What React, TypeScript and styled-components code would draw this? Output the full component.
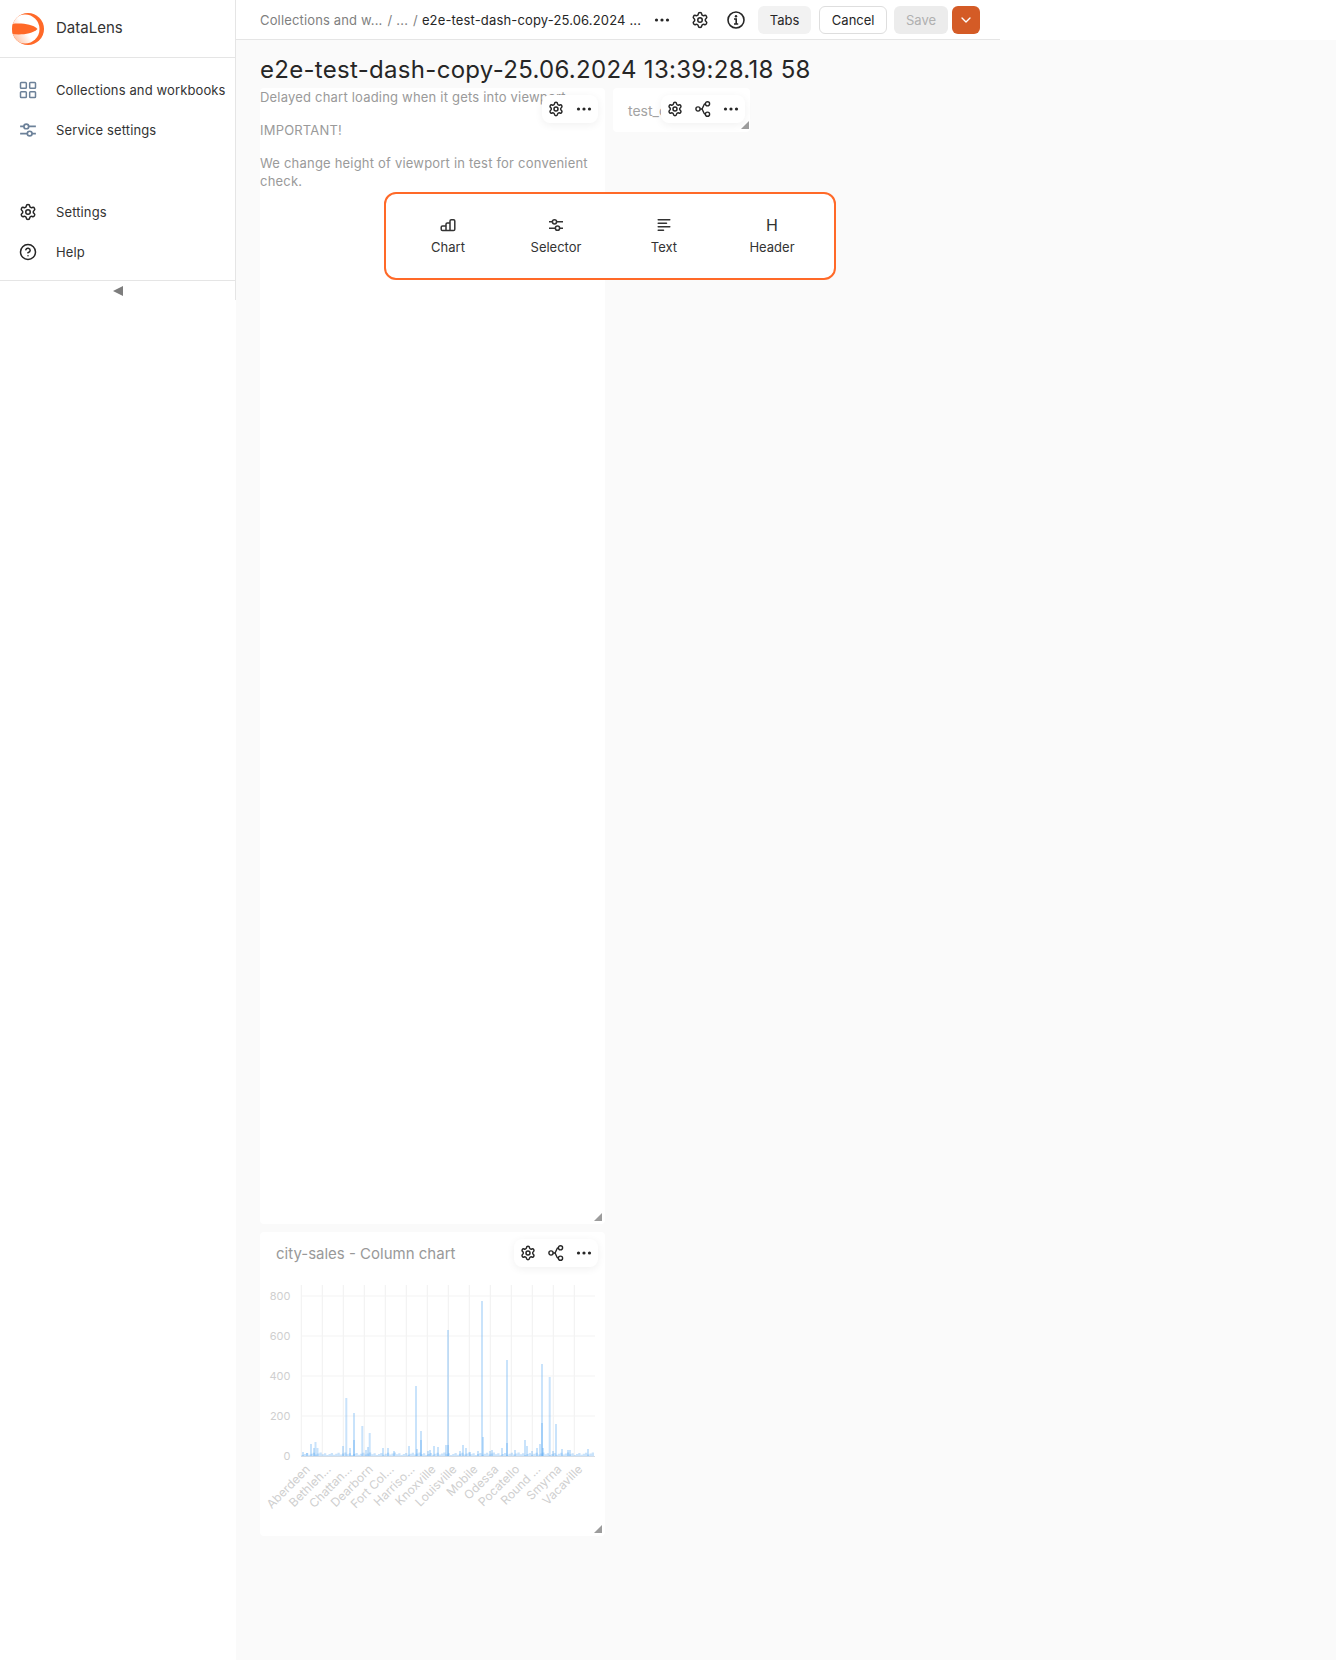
import React from 'react';
import styled, { createGlobalStyle } from 'styled-components';
import { ChevronDown, CircleHelp, LayoutGrid, Settings } from 'lucide-react';

const GlobalStyle = createGlobalStyle`
  html, body {
    margin: 0;
    padding: 0;
    background: #fff;
    font-family: Inter, "Noto Sans", sans-serif;
    font-size: 13px;
    color: #262626;
  }
`;

const Page = styled.div`
  display: grid;
  grid-template-columns: 236px 1fr;
  width: 1336px;
  height: 1660px;
  overflow: hidden;
`;

const Aside = styled.aside`
  height: 300px;
  border-right: 1px solid #e5e5e5;
  display: flex;
  flex-direction: column;
`;

const Brand = styled.div`
  display: flex;
  align-items: center;
  gap: 12px;
  height: 57px;
  box-sizing: content-box;
  padding-left: 12px;
  border-bottom: 1px solid #e5e5e5;
  font-size: 15px;
  color: #333;
`;

const BrandName = styled.span`
  margin-bottom: 2px;
`;

const Nav = styled.nav`
  display: flex;
  flex-direction: column;
  padding-top: 12px;
`;

const NavRow = styled.div<{ $gap?: number }>`
  display: flex;
  align-items: center;
  height: 40px;
  margin-top: ${({ $gap }) => $gap ?? 0}px;
  color: #333;
  letter-spacing: 0.12px;
  white-space: nowrap;
`;

const NavIcon = styled.span<{ $muted?: boolean }>`
  display: flex;
  justify-content: center;
  width: 56px;
  color: ${({ $muted }) => ($muted ? '#6c8199' : '#262626')};
`;

const Collapse = styled.div`
  margin-top: auto;
  height: 19px;
  border-top: 1px solid #e5e5e5;
  display: flex;
  align-items: center;
  justify-content: center;
`;

const CollapseArrow = styled.span`
  width: 0;
  height: 0;
  border-top: 5px solid transparent;
  border-bottom: 5px solid transparent;
  border-right: 10px solid #7d7d7d;
`;

const Main = styled.main`
  display: flex;
  flex-direction: column;
  position: relative;
`;

const TopBar = styled.header`
  width: 764px;
  height: 40px;
  box-sizing: border-box;
  border-bottom: 1px solid #e5e5e5;
  display: flex;
  align-items: center;
  padding: 0 20px 0 24px;
  white-space: nowrap;
`;

const Crumbs = styled.div`
  display: flex;
  align-items: center;
  width: 395px;
  color: #7f7f7f;
  letter-spacing: 0.15px;
`;

const CrumbSep = styled.span`
  margin: 0 4px 0 5px;
`;

const CrumbCurrent = styled.span`
  color: #262626;
`;

const TopIcon = styled.span<{ $left: number }>`
  display: flex;
  margin-left: ${({ $left }) => $left}px;
  color: #262626;
`;

const Button = styled.button<{ $kind: 'normal' | 'outlined' | 'disabled'; $left?: number }>`
  height: 28px;
  box-sizing: border-box;
  padding: 0 ${({ $kind }) => ($kind === 'outlined' ? '11.5px' : '12px')};
  border-radius: 6px;
  font: inherit;
  border: ${({ $kind }) => ($kind === 'outlined' ? '1px solid #dedede' : 'none')};
  background: ${({ $kind }) =>
    $kind === 'outlined' ? '#fff' : $kind === 'normal' ? '#f2f2f2' : '#ececec'};
  color: ${({ $kind }) => ($kind === 'disabled' ? '#b0b0b0' : '#262626')};
  margin-left: ${({ $left }) => $left ?? 8}px;
`;

const ArrowButton = styled.button`
  width: 28px;
  height: 28px;
  padding: 0;
  margin-left: 4px;
  border: none;
  border-radius: 6px;
  background: #d45b26;
  color: #fff;
  display: flex;
  align-items: center;
  justify-content: center;
`;

const Canvas = styled.div`
  flex: 1;
  background: #fafafa;
  padding-left: 24px;
`;

const Title = styled.h1`
  margin: 0;
  height: 48px;
  box-sizing: border-box;
  padding-top: 15px;
  font-size: 24px;
  line-height: 30px;
  font-weight: 400;
  letter-spacing: 0.3px;
  color: #262626;
  white-space: nowrap;
`;

const DashGrid = styled.div`
  display: grid;
  grid-template-columns: 345px 137px;
  column-gap: 8px;
  align-items: start;
`;

const Column = styled.div`
  display: flex;
  flex-direction: column;
  gap: 8px;
`;

const Widget = styled.section<{ $height: number }>`
  position: relative;
  height: ${({ $height }) => $height}px;
  background: #fff;
  border-radius: 4px;
`;

const Notes = styled.div`
  color: #9a9a9a;
  line-height: 18px;
  letter-spacing: 0.2px;

  p {
    margin: 0 0 15px;
  }
`;

const SmallTitle = styled.div`
  padding: 13px 0 0 15px;
  font-size: 14px;
  line-height: 20px;
  color: #a3a3a3;
`;

const ChartTitle = styled.div`
  padding: 12px 0 0 16px;
  height: 44px;
  box-sizing: border-box;
  font-size: 15px;
  line-height: 20px;
  color: #999;
`;

const Controls = styled.div<{ $right: number }>`
  position: absolute;
  top: 7px;
  right: ${({ $right }) => $right}px;
  height: 28px;
  background: #fff;
  border-radius: 8px;
  box-shadow: 0 2px 8px rgba(0, 0, 0, 0.06);
  display: flex;
  color: #262626;
`;

const ControlBtn = styled.span`
  width: 28px;
  height: 28px;
  display: flex;
  align-items: center;
  justify-content: center;
`;

const ResizeHandle = styled.span<{ $inset?: number }>`
  position: absolute;
  right: ${({ $inset }) => $inset ?? 3}px;
  bottom: 3px;
  width: 0;
  height: 0;
  border-left: 8px solid transparent;
  border-bottom: 8px solid #9c9c9c;
`;

const Palette = styled.div`
  position: absolute;
  left: 148px;
  top: 192px;
  width: 452px;
  height: 88px;
  box-sizing: border-box;
  border: 2px solid #ff6928;
  border-radius: 12px;
  background: #fff;
  padding: 0 8px;
  display: grid;
  grid-template-columns: repeat(4, 108px);
`;

const PaletteItem = styled.div`
  display: flex;
  flex-direction: column;
  align-items: center;
  padding-top: 23px;
  gap: 5px;
  color: #333;
  line-height: 18px;
`;

const PaletteGlyph = styled.span`
  display: flex;
  align-items: center;
  justify-content: center;
  height: 16px;
  font-size: 16px;
  line-height: 16px;
`;

const Logo = () => (
  <svg width="32" height="32" viewBox="0 0 32 32">
    <defs>
      <linearGradient id="lens" x1="1" y1="0.2" x2="0" y2="0.8">
        <stop offset="0.5" stopColor="#fff" />
        <stop offset="1" stopColor="#ffb794" />
      </linearGradient>
      <clipPath id="disc">
        <circle cx="16" cy="16" r="16" />
      </clipPath>
    </defs>
    <circle cx="16" cy="16" r="16" fill="#ff6928" />
    <g clipPath="url(#disc)">
      <circle cx="13" cy="16" r="14.5" fill="url(#lens)" />
      <path d="M0 11C8 10 20 10.5 25.5 16C20 21.5 8 22 0 21Z" fill="#ff6928" />
    </g>
  </svg>
);

const Dots = () => (
  <svg width="16" height="16" viewBox="0 0 16 16" fill="currentColor">
    <circle cx="2.5" cy="8" r="1.6" />
    <circle cx="8" cy="8" r="1.6" />
    <circle cx="13.5" cy="8" r="1.6" />
  </svg>
);

const Nodes = () => (
  <svg width="16" height="16" viewBox="0 0 16 16" fill="none" stroke="currentColor" strokeWidth="1.4">
    <circle cx="3" cy="8" r="2.1" />
    <circle cx="12.5" cy="2.8" r="2.1" />
    <circle cx="12.5" cy="13.2" r="2.1" />
    <path d="M5.1 8H6.5C8.5 8 8 2.8 10.4 2.8M6.5 8C8.5 8 8 13.2 10.4 13.2" />
  </svg>
);

const Info = () => (
  <svg width="18" height="18" viewBox="0 0 18 18" fill="none" stroke="currentColor" strokeWidth="1.6">
    <circle cx="9" cy="9" r="8" />
    <path d="M7 8H9.2V13M7 13H11.2" />
    <circle cx="9" cy="5.3" r="1.2" fill="currentColor" stroke="none" />
  </svg>
);

const Sliders = ({ size = 16 }: { size?: number }) => (
  <svg width={size} height={size} viewBox="0 0 16 16" fill="none" stroke="currentColor" strokeWidth="1.5">
    <path d="M1 4.8H4.5M8.5 4.8H15M1 11.2H7.5M11.5 11.2H15" />
    <circle cx="6.5" cy="4.8" r="2.1" />
    <circle cx="9.5" cy="11.2" r="2.1" />
  </svg>
);

const ChartGlyph = () => (
  <svg width="16" height="16" viewBox="0 0 16 16" fill="none" stroke="currentColor" strokeWidth="1.5" strokeLinejoin="round">
    <path d="M6 13.5H2.5C1.7 13.5 1.2 13 1.2 12.2V10.3C1.2 9.5 1.7 9 2.5 9H6M6 13.5V7.3C6 6.5 6.5 6 7.3 6H10V13.5M6 13.5H10M10 13.5H13.5C14.3 13.5 14.8 13 14.8 12.2V4C14.8 3.2 14.3 2.7 13.5 2.7H11.3C10.5 2.7 10 3.2 10 4V6" />
  </svg>
);

const TextGlyph = () => (
  <svg width="16" height="16" viewBox="0 0 16 16" fill="none" stroke="currentColor" strokeWidth="1.5" strokeLinecap="round">
    <path d="M2.2 2.7H13.8M2.2 6.2H10.5M2.2 9.7H13.8M2.2 13.2H7.5" />
  </svg>
);

const GRID_X = Array.from({ length: 14 }, (_, i) => 41.3 + i * 21);
const GRID_Y = [0, 200, 400, 600, 800];
const BASE = 180;

const CITIES = [
  'Aberdeen', 'Bethleh...', 'Chattan...', 'Dearborn', 'Fort Col...', 'Harriso...', 'Knoxville',
  'Louisville', 'Mobile', 'Odessa', 'Pocatello', 'Round ...', 'Smyrna', 'Vacaville',
];

// page x and pixel height of each bar, measured off the reference
const TALL_BARS: [number, number][] = [
  [345.3, 58], [353, 43], [361.3, 30], [368.7, 23], [415, 70], [420, 25], [447, 126], [481, 155],
  [506, 96], [541, 92], [548.7, 79], [555, 32],
];
const SMALL_BARS: [number, number][] = [
  [302, 4], [306, 3], [310, 12], [313, 8], [314.5, 14], [316.5, 8], [342, 10], [349, 8], [353, 16], [365, 6],
  [367, 9], [382, 8], [387, 8], [393, 5], [408, 10], [416, 7], [420, 16], [427, 5], [429, 6], [433, 10], [437, 9],
  [445, 11], [447, 11], [459, 5], [462, 11], [465, 8], [469, 4], [477, 5], [482, 19], [489, 5], [491, 6], [501, 8],
  [506, 13], [514, 6], [524, 16], [526, 10], [531, 5], [536, 8], [539, 12], [541, 33], [542, 8], [552, 5], [561, 7],
  [567, 6], [569, 6], [587, 7],
];

const noiseBars = Array.from({ length: 130 }, (_, i) => ({
  x: 301.5 + i * 2.25,
  h: 1 + ((i * 37) % 11) / 4,
}));

const ChartPlot = () => (
  <svg width="345" height="250" viewBox="0 0 345 250" fontFamily="Inter, sans-serif">
    {GRID_X.map((x) => (
      <line key={x} x1={x} x2={x} y1={9} y2={BASE} stroke="#f1f1f1" />
    ))}
    {GRID_Y.map((v) => (
      <g key={v}>
        {v > 0 && <line x1={41} x2={335} y1={BASE - v / 5} y2={BASE - v / 5} stroke="#f3f3f3" />}
        <text x={30.5} y={BASE - v / 5 + 4} fontSize="11" fill="#cfcfcf" textAnchor="end">
          {v}
        </text>
      </g>
    ))}
    <g fill="#4da2f1" fillOpacity="0.3">
      {noiseBars.map((b) => (
        <rect key={b.x} x={b.x - 260} y={BASE - b.h} width="2.25" height={b.h} />
      ))}
      {SMALL_BARS.map(([x, h]) => (
        <rect key={x} x={x - 260} y={BASE - h} width="2" height={h} />
      ))}
      {TALL_BARS.map(([x, h]) => (
        <rect key={x} x={x - 260} y={BASE - h} width="2" height={h} />
      ))}
    </g>
    <line x1={41} x2={335} y1={BASE + 0.5} y2={BASE + 0.5} stroke="#d5dde6" />
    {CITIES.map((c, i) => (
      <text
        key={c}
        transform={`translate(${50.8 + i * 20.95} 194) rotate(-45)`}
        fontSize="12"
        fill="#cfcfcf"
        textAnchor="end"
      >
        {c}
      </text>
    ))}
  </svg>
);

const App = () => (
  <Page>
    <GlobalStyle />
    <Aside>
      <Brand>
        <Logo />
        <BrandName>DataLens</BrandName>
      </Brand>
      <Nav>
        <NavRow>
          <NavIcon $muted><LayoutGrid size={20} strokeWidth={1.8} /></NavIcon>
          Collections and workbooks
        </NavRow>
        <NavRow>
          <NavIcon $muted><Sliders size={18} /></NavIcon>
          Service settings
        </NavRow>
        <NavRow $gap={42}>
          <NavIcon><Settings size={18} strokeWidth={2} /></NavIcon>
          Settings
        </NavRow>
        <NavRow>
          <NavIcon><CircleHelp size={18} strokeWidth={2} /></NavIcon>
          Help
        </NavRow>
      </Nav>
      <Collapse><CollapseArrow /></Collapse>
    </Aside>
    <Main>
      <TopBar>
        <Crumbs>
          Collections and w...
          <CrumbSep>/</CrumbSep>
          ...
          <CrumbSep>/</CrumbSep>
          <CrumbCurrent>e2e-test-dash-copy-25.06.2024 ...</CrumbCurrent>
        </Crumbs>
        <TopIcon $left={0}><Dots /></TopIcon>
        <TopIcon $left={21}><Settings size={18} strokeWidth={2} /></TopIcon>
        <TopIcon $left={18}><Info /></TopIcon>
        <Button $kind="normal" $left={13}>Tabs</Button>
        <Button $kind="outlined">Cancel</Button>
        <Button $kind="disabled" $left={7}>Save</Button>
        <ArrowButton><ChevronDown size={16} /></ArrowButton>
      </TopBar>
      <Canvas>
        <Title>e2e-test-dash-copy-25.06.2024 13:39:28.18 58</Title>
        <DashGrid>
          <Column>
            <Widget $height={1136}>
              <Notes>
                <p>Delayed chart loading when it gets into viewport</p>
                <p>IMPORTANT!</p>
                <p>We change height of viewport in test for convenient check.</p>
              </Notes>
              <Controls $right={7}>
                <ControlBtn><Settings size={16} strokeWidth={2.2} /></ControlBtn>
                <ControlBtn><Dots /></ControlBtn>
              </Controls>
              <ResizeHandle />
            </Widget>
            <Widget $height={304}>
              <ChartTitle>city-sales - Column chart</ChartTitle>
              <ChartPlot />
              <Controls $right={7}>
                <ControlBtn><Settings size={16} strokeWidth={2.2} /></ControlBtn>
                <ControlBtn><Nodes /></ControlBtn>
                <ControlBtn><Dots /></ControlBtn>
              </Controls>
              <ResizeHandle />
            </Widget>
          </Column>
          <Widget $height={44}>
            <SmallTitle>test_chart</SmallTitle>
            <Controls $right={5}>
              <ControlBtn><Settings size={16} strokeWidth={2.2} /></ControlBtn>
              <ControlBtn><Nodes /></ControlBtn>
              <ControlBtn><Dots /></ControlBtn>
            </Controls>
            <ResizeHandle $inset={1} />
          </Widget>
        </DashGrid>
        <Palette>
          <PaletteItem><PaletteGlyph><ChartGlyph /></PaletteGlyph>Chart</PaletteItem>
          <PaletteItem><PaletteGlyph><Sliders /></PaletteGlyph>Selector</PaletteItem>
          <PaletteItem><PaletteGlyph><TextGlyph /></PaletteGlyph>Text</PaletteItem>
          <PaletteItem><PaletteGlyph>H</PaletteGlyph>Header</PaletteItem>
        </Palette>
      </Canvas>
    </Main>
  </Page>
);

export default App;
